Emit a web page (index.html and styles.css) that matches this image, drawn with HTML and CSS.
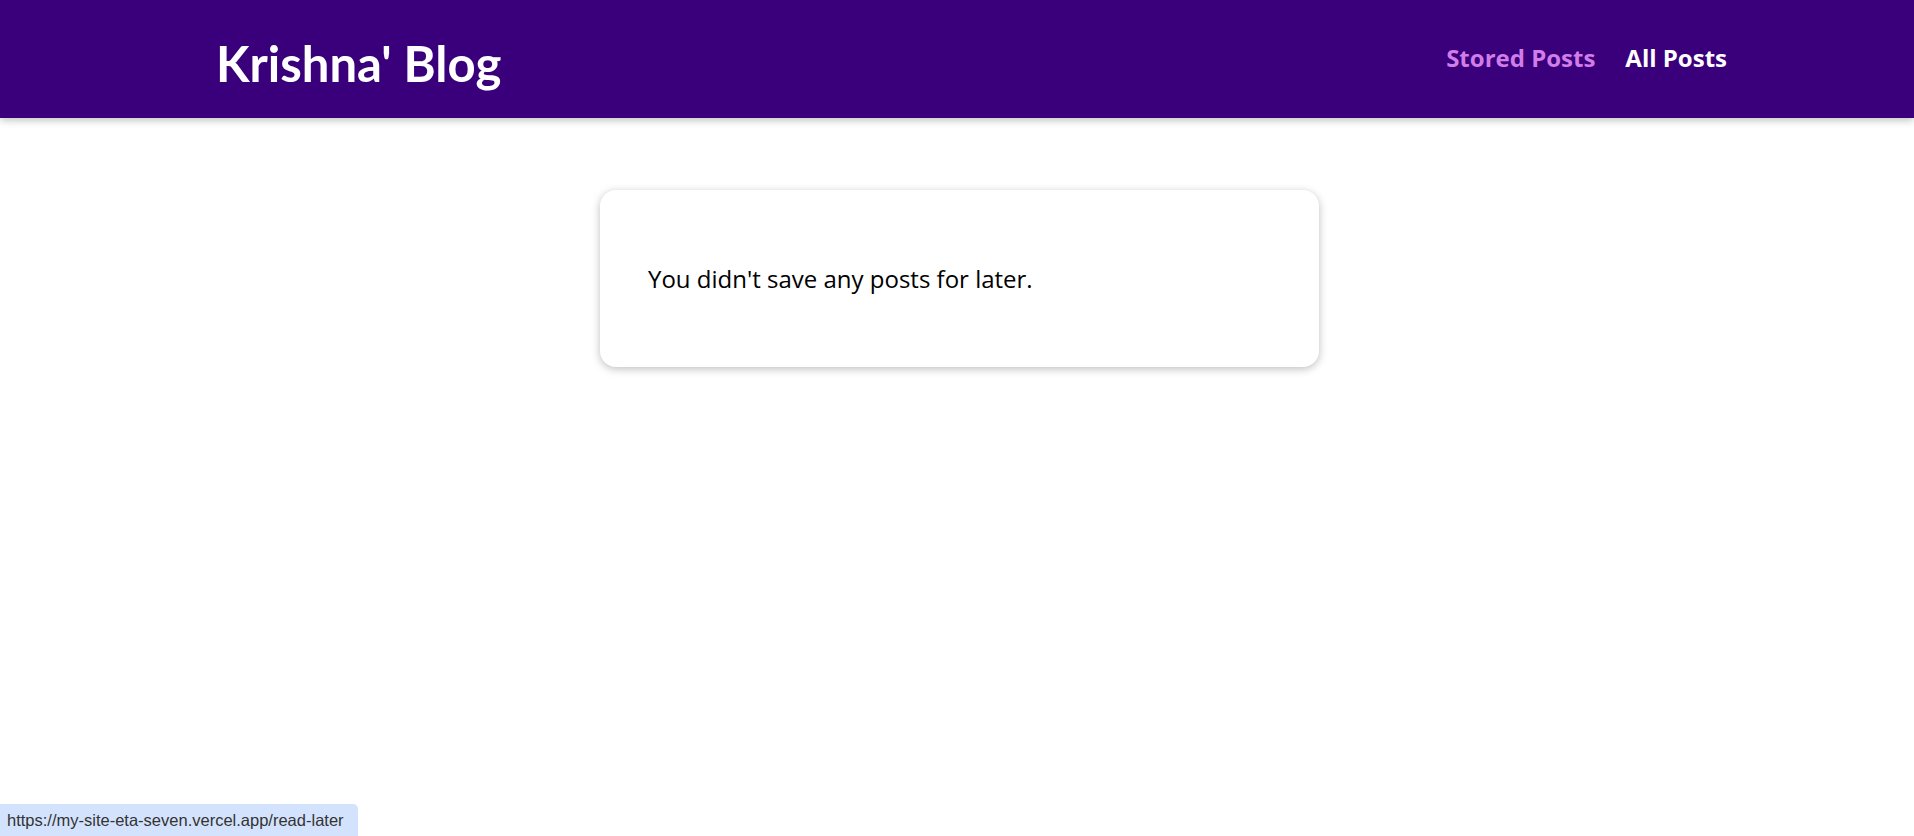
FILE: index.html
```html
<!DOCTYPE html>
<html lang="en">
<head>
<meta charset="utf-8">
<title>Krishna' Blog</title>
<link rel="stylesheet" href="styles.css">
</head>
<body>
<header class="main-header">
  <div class="logo">Krishna' Blog</div>
  <nav class="main-nav">
    <a class="nav-link active" href="#">Stored Posts</a>
    <a class="nav-link" href="#">All Posts</a>
  </nav>
</header>
<main class="content">
  <section class="card">
    <p class="empty-msg">You didn't save any posts for later.</p>
  </section>
</main>
<div class="status-bar">https://my-site-eta-seven.vercel.app/read-later</div>
</body>
</html>
```

FILE: styles.css
```css
* { box-sizing: border-box; }
html, body { margin: 0; padding: 0; }
body {
  font-family: "Open Sans", sans-serif;
  background: #ffffff;
  color: #000;
  width: 1914px;
  height: 836px;
  overflow: hidden;
  position: relative;
}
.main-header {
  height: 118px;
  background: #3a007b;
  display: flex;
  align-items: center;
  justify-content: space-between;
  padding: 0 187px 0 216px;
  box-shadow: 0 2px 8px rgba(0, 0, 0, 0.26);
  position: relative;
  z-index: 1;
}
.logo {
  font-family: "Lato", sans-serif;
  font-weight: 700;
  font-size: 49px;
  color: #ffffff;
  line-height: 1;
  margin-top: 8px;
}
.main-nav {
  display: flex;
  gap: 30px;
  margin-bottom: 4px;
}
.nav-link {
  font-family: "Open Sans", sans-serif;
  font-weight: 700;
  font-size: 24px;
  color: #ffffff;
  text-decoration: none;
}
.nav-link.active { color: #d07ce9; }
.content {
  padding-top: 72px;
}
.card {
  width: 719px;
  margin-left: calc(50% - 357px);
  height: 177px;
  background: #fff;
  border-radius: 16px;
  box-shadow: 0 2px 8px rgba(0, 0, 0, 0.26);
  padding: 0 48px;
  display: flex;
  align-items: center;
}
.empty-msg {
  margin: 0;
  font-size: 24px;
  line-height: 1.5;
}
.status-bar {
  position: absolute;
  left: 0;
  bottom: 0;
  width: 358px;
  height: 32px;
  background: #d3e3fd;
  border-top-right-radius: 5px;
  font-family: "Liberation Sans", sans-serif;
  font-size: 16.5px;
  color: #333;
  padding: 7px 0 0 7px;
}
```
